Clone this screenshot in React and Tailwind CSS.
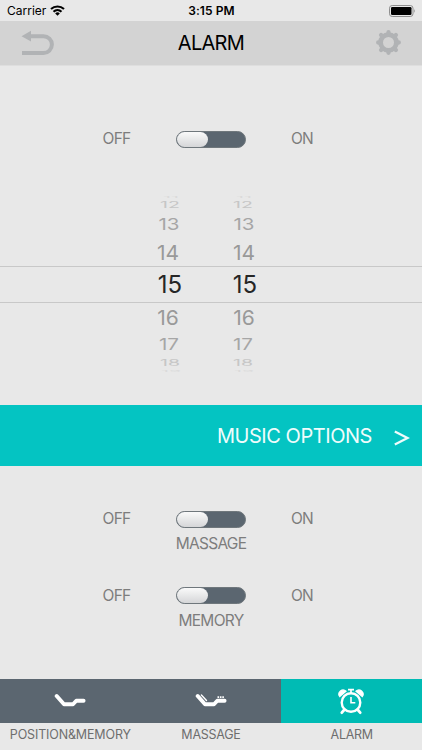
import { useState } from 'react'

// rows get flatter and paler away from the selected one
const pickerRows = [
  { value: 11, row: 'h-[6px] pl-[146px] gap-[23px]', text: 'text-[19.5px] scale-y-[0.12] text-[#dadada]' },
  { value: 12, row: 'h-[10px] pl-[145px] gap-[23px]', text: 'text-[19.5px] scale-y-[0.46] text-[#c6c6c6]' },
  { value: 13, row: 'h-[28px] pl-[144px] gap-[25px]', text: 'text-[20.5px] scale-y-[0.78] text-[#a6a6a6]' },
  { value: 14, row: 'h-[28px] pl-[143px] gap-[26px]', text: 'text-[21px] scale-y-[0.96] text-[#999999]' },
  { value: 15, row: 'h-[37px] pl-[145px] gap-[25px] border-y border-[#c8c8c8]', text: 'text-[24px] text-[#262626]' },
  { value: 16, row: 'h-[28px] pl-[143px] gap-[26px]', text: 'text-[21px] scale-y-[0.96] text-[#999999]' },
  { value: 17, row: 'h-[27px] pl-[144px] gap-[24px]', text: 'text-[20.5px] scale-y-[0.78] text-[#a6a6a6]' },
  { value: 18, row: 'h-[10px] pl-[145px] gap-[23px]', text: 'text-[19.5px] scale-y-[0.46] text-[#c6c6c6]' },
  { value: 19, row: 'h-[8px] pl-[146px] gap-[23px]', text: 'text-[19.5px] scale-y-[0.12] text-[#dadada]' },
]

function Picker() {
  return (
    <div className="h-[215px] shrink-0 pt-1">
      {pickerRows.map((r) => (
        <div key={r.value} className={`flex items-center ${r.row}`}>
          <span className={`w-[50px] text-center leading-none ${r.text}`}>{r.value}</span>
          <span className={`w-[50px] text-center leading-none ${r.text}`}>{r.value}</span>
        </div>
      ))}
    </div>
  )
}

function Toggle({ label }) {
  const [on, setOn] = useState(false)

  return (
    <div className="text-[15.5px] text-[#7d7d7d]">
      <div className="flex h-[18px] items-center">
        <span className="ml-[102.5px] w-[73.5px] tracking-[-0.7px]">OFF</span>
        <button
          onClick={() => setOn(!on)}
          className={`flex h-[17px] w-[70px] rounded-full border border-[#6f777c] bg-[#5b6670] ${on ? 'justify-end' : ''}`}
        >
          <span className="h-[15px] w-[31px] rounded-full bg-linear-to-b from-[#fafafa] to-[#d5d6d8]" />
        </button>
        <span className="ml-[45px] tracking-[-0.8px]">ON</span>
      </div>
      {label && <p className="mt-[6px] h-[19px] text-center leading-5 tracking-[-0.7px]">{label}</p>}
    </div>
  )
}

function BedIcon({ massage }) {
  return (
    <svg width="32" height="16" viewBox="0 0 32 16" fill="none" stroke="#fff" strokeLinecap="round" strokeLinejoin="round">
      <path d="M2.7 3 L10 11.3 H19 L22.3 7.7 H29.6" strokeWidth="3.9" />
      {massage && (
        <>
          <path d="M6.4 2 L11.5 7.5" strokeWidth="1.4" />
          <path d="M22.5 4.2 H29" strokeWidth="1.7" strokeDasharray="1.6 0.8" strokeLinecap="butt" />
        </>
      )}
    </svg>
  )
}

function ClockIcon() {
  return (
    <svg className="mt-px mr-px" width="26" height="27" viewBox="0 0 26 27" fill="none" stroke="#fff">
      <circle cx="13" cy="14.5" r="9.3" strokeWidth="2.4" />
      <path d="M13 9 V14.8 H17.3" strokeWidth="1.6" />
      <path d="M10 1.6 H16 M13 1.6 V5" strokeWidth="1.7" />
      <path d="M6.5 21.5 L3.8 24.7 M19.5 21.5 L22.2 24.7" strokeWidth="2.8" strokeLinecap="round" />
      <path d="M1.7 8.5 A4.1 4.1 0 0 1 8 3.3 Z M24.3 8.5 A4.1 4.1 0 0 0 18 3.3 Z" fill="#fff" strokeWidth="1.3" />
    </svg>
  )
}

const tabs = [
  { name: 'POSITION&MEMORY', icon: <BedIcon />, style: 'bg-[#5b6670]', text: 'tracking-[-0.15px]' },
  { name: 'MASSAGE', icon: <BedIcon massage />, style: 'bg-[#5b6670]', text: 'tracking-[-0.25px]' },
  { name: 'ALARM', icon: <ClockIcon />, style: 'bg-[#00bbb4]', text: 'tracking-[-0.3px]' },
]

export default function App() {
  return (
    <div className="flex h-[750px] w-[422px] flex-col overflow-hidden bg-[#e8e8e8] font-['Inter',sans-serif]">
      <div className="grid h-[21px] shrink-0 grid-cols-3 items-center pl-[7px] pr-[6px] text-[12px] text-black">
        <div className="flex items-center gap-[4px]">
          <span className="tracking-[0px]">Carrier</span>
          <svg width="15" height="11" viewBox="0 0 15 11" fill="none" stroke="#000" strokeWidth="2.1">
            <path d="M1 4.1 A9.4 9.4 0 0 1 14 4.1" />
            <path d="M3.5 6.7 A5.8 5.8 0 0 1 11.5 6.7" />
            <path d="M7.5 10.7 L5.2 8.4 A3.3 3.3 0 0 1 9.8 8.4 Z" fill="#000" stroke="none" />
          </svg>
        </div>
        <span className="text-center font-semibold tracking-[0.1px]">3:15 PM</span>
        <svg className="justify-self-end" width="27" height="12" viewBox="0 0 27 12">
          <rect x="0.5" y="0.5" width="23.5" height="11" rx="2.7" fill="none" stroke="#8e8e8e" />
          <rect x="2" y="2" width="20.5" height="8" rx="1.2" fill="#000" />
          <path d="M25.2 4 Q26.8 6 25.2 8 Z" fill="#8e8e8e" />
        </svg>
      </div>

      <header className="flex h-[45px] shrink-0 items-center justify-between border-b border-[#dedede] bg-[#d3d3d3] px-[21px]">
        <svg width="33" height="26" viewBox="0 0 33 26" fill="none">
          <path d="M8 6.2 H22.5 A8.4 8.4 0 0 1 22.5 23 H1" stroke="#b1b3b5" strokeWidth="4" />
          <path d="M0.5 6.2 L10 0.8 V11.6 Z" fill="#b1b3b5" />
        </svg>
        <h1 className="mr-[8px] text-[20px] tracking-[-0.7px] text-black">ALARM</h1>
        <svg className="-mt-px" width="25" height="25" viewBox="-12.5 -12.5 25 25" fill="none" stroke="#b1b3b5">
          <circle r="7.9" strokeWidth="4.8" />
          <path
            d="M0 -9.5 V-10.3 M0 9.5 V10.3 M-9.5 0 H-10.3 M9.5 0 H10.3 M6.7 6.7 L7.4 7.4 M-6.7 6.7 L-7.4 7.4 M6.7 -6.7 L7.4 -7.4 M-6.7 -6.7 L-7.4 -7.4"
            strokeWidth="4.3"
            strokeLinecap="round"
          />
        </svg>
      </header>

      <div className="h-[124px] shrink-0 pt-[64px]">
        <Toggle />
      </div>

      <Picker />

      <button className="flex h-[61px] shrink-0 items-center justify-end bg-[#04c4c2] pr-[12px] text-[20px] text-[#effcfc]">
        <span className="tracking-[-0.45px]">MUSIC OPTIONS</span>
        <svg className="ml-[22px] mt-[4px]" width="16" height="16" viewBox="0 0 16 16" fill="none" stroke="#effcfc" strokeWidth="2.3">
          <path d="M0.8 1.5 L13.5 8 L0.8 14.5" />
        </svg>
      </button>

      <div className="flex h-[212.5px] shrink-0 flex-col gap-[33.5px] pt-[44px]">
        <Toggle label="MASSAGE" />
        <Toggle label="MEMORY" />
      </div>

      <nav className="grid grow grid-cols-3">
        {tabs.map((t) => (
          <div key={t.name} className="text-center">
            <div className={`flex h-[44.5px] items-center justify-center ${t.style}`}>{t.icon}</div>
            <p className={`pt-[2px] text-[12.5px] leading-5 text-[#6e6e6e] ${t.text}`}>{t.name}</p>
          </div>
        ))}
      </nav>
    </div>
  )
}
